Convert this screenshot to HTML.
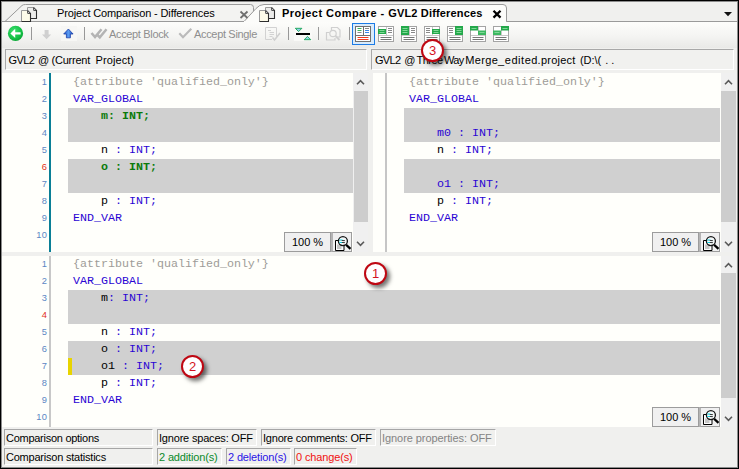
<!DOCTYPE html>
<html><head><meta charset="utf-8"><title>Project Compare - GVL2 Differences</title>
<style>
html,body{margin:0;padding:0;}
body{width:739px;height:469px;overflow:hidden;background:#f0f0ee;font-family:"Liberation Sans",sans-serif;font-size:11px;color:#000;position:relative;}
.a{position:absolute;}
#frame{left:0;top:0;width:737px;height:467px;border:1px solid #000;z-index:50;pointer-events:none;box-shadow:inset 0 0 0 1px #8c8c8c;}
.t{position:absolute;white-space:nowrap;line-height:14px;}
/* tabs */
#tabline{left:1px;top:21px;width:737px;height:1px;background:#9a9a9a;}
#toolbar{left:1px;top:22px;width:737px;height:26px;background:linear-gradient(#fdfdfb,#f4f4f2 55%,#e9e9e7);}
.sep{position:absolute;top:27px;width:1px;height:13px;background:#989898;}
.hdr{position:absolute;top:49px;height:21px;border:1px solid #a8a8a8;border-right-color:#fff;border-bottom-color:#fff;box-sizing:border-box;background:#f1f1ef;}
.pane{position:absolute;background:#fffffb;overflow:hidden;}
.code{position:absolute;font-family:"Liberation Mono",monospace;font-size:11.67px;line-height:17px;white-space:pre;}
.code div{height:17px;}
.ln{position:absolute;text-align:right;letter-spacing:0.5px;margin-left:0.5px;font-size:9.3px;line-height:17px;color:#5b86c4;}
.ln div{height:17px;}
.ln .r{color:#e03020;}
.g{position:absolute;background:#d0d0d0;}
.k{color:#2a04d4;}
.c{color:#9e9c98;}
.gr{color:#0a7a0a;font-weight:bold;}
.sb{position:absolute;background:#f0f0f0;}
.th{position:absolute;background:#cdcdcd;}
.zoom{position:absolute;width:47px;height:20px;border:1px solid #9c9c9c;box-sizing:border-box;background:#f0f0f0;text-align:center;line-height:18px;font-size:11px;}
.zb{position:absolute;width:21px;height:20px;border:1px solid #9c9c9c;border-left:2px solid #b4b4b4;box-sizing:border-box;background:#f0f0f0;}
.st{position:absolute;height:17px;border:1px solid #a6a6a6;border-right-color:#fff;border-bottom-color:#fff;box-sizing:border-box;line-height:17px;padding-left:1px;white-space:nowrap;font-size:11px;}
.ball{position:absolute;width:19px;height:19px;border-radius:50%;border:2px solid #bf0712;background:#fff;color:#d41222;font-size:13px;line-height:19px;text-align:center;box-shadow:3px 3px 4px rgba(0,0,0,.55);z-index:20;}
</style></head><body>
<!-- TABS -->
<div class="a" id="tabline"></div>
<svg class="a" style="left:0;top:0" width="739" height="24" viewBox="0 0 739 24">
 <path d="M5 21.5 L22 5.5 Q23 4.5 25.5 4.5 L250.5 4.5 Q253.5 4.5 253.5 7.5 L253.5 12 L245 21.5 Z" fill="#f3f3f1" stroke="#9a9a9a" stroke-width="1"/>
 <path d="M244 21.5 L256 8.5 Q259.5 4.5 264 4.5 L503 4.5 Q506.5 4.5 506.5 8 L506.5 21.5" fill="#fcfcfa" stroke="#9a9a9a" stroke-width="1"/>
 <rect x="244" y="21" width="262" height="2" fill="#fcfcfa"/>
<g id="docs">
  <path d="M27.500 7.500 h6 l3 3 v8 h-9 z" fill="#ececea" stroke="#9a9a9a" stroke-width="1"/>
  <path d="M33.500 7.500 l3 3 v8 h-5.500" fill="none" stroke="#2e2e2e" stroke-width="1.100"/>
  <path d="M33.700 8 v2.400 h2.400" fill="#fff" stroke="#2e2e2e" stroke-width="0.900"/>
  <path d="M21.500 10.500 h6 l3 3 v8 h-9 z" fill="#fdfbe9" stroke="#9a9a9a" stroke-width="1"/>
  <path d="M27.500 10.500 l3 3 v8 h-9" fill="none" stroke="#2e2e2e" stroke-width="1.100"/>
  <path d="M27.700 11 v2.400 h2.400" fill="#fff" stroke="#2e2e2e" stroke-width="0.900"/>
 </g>
 <use href="#docs" x="238" y="0"/>
 <path d="M240.500 11.500 l7 6.500 M247.500 11.500 l-7 6.500" stroke="#6e6e6e" stroke-width="1.800" fill="none"/>
 <path d="M493.500 10.800 l7 6.800 M500.500 10.800 l-7 6.800" stroke="#000" stroke-width="2.300" fill="none"/>
 <path d="M724 12 h8 l-4 4.200 z" fill="#111"/>
</svg>
<div class="t" style="letter-spacing:-0.134px;left:57px;top:6px;">Project Comparison - Differences</div>
<div class="t" style="left:282px;top:6px;font-weight:bold;"><span style="letter-spacing:0.465px;">Project Compare - </span><span style="letter-spacing:0.17px;">GVL2 Differences</span></div>
<!-- TOOLBAR -->
<div class="a" id="toolbar"></div>
<svg class="a" style="left:0;top:22px" width="739" height="24" viewBox="0 22 739 24">
 <defs>
  <radialGradient id="gg" cx="0.4" cy="0.35" r="0.7"><stop offset="0" stop-color="#3ee070"/><stop offset="0.7" stop-color="#12bf44"/><stop offset="1" stop-color="#0aa233"/></radialGradient>
  <linearGradient id="bl" x1="0" y1="0" x2="1" y2="0"><stop offset="0" stop-color="#1d55c8"/><stop offset="0.5" stop-color="#5a9cf2"/><stop offset="1" stop-color="#1d4fc0"/></linearGradient>
 </defs>
 <circle cx="15.5" cy="33.4" r="7.6" fill="url(#gg)"/>
 <path d="M10.400 33.400 L15.200 28.800 L15.200 32.200 L20.600 32.200 L20.600 34.600 L15.200 34.600 L15.200 38 Z" fill="#fff"/>
 <path d="M44.6 30 h4 v4.6 h2.6 l-4.6 4.6 l-4.6 -4.6 h2.6 z" fill="#d0d0d0"/>
 <rect x="61" y="26" width="16" height="15" fill="#f7f7f5"/>
 <path d="M68.4 29 l4.7 5 h-2.7 v3.8 h-4 v-3.8 h-2.7 z" fill="url(#bl)" stroke="#1a3fa8" stroke-width="0.8"/>
 <path d="M91.500 33 L95 37 L101.500 29.300" fill="none" stroke="#b4b4b4" stroke-width="2.500"/>
 <path d="M97.500 35 L99.800 37.300 L106.500 29.300" fill="none" stroke="#b4b4b4" stroke-width="2.500"/>
 <path d="M179.300 33.300 L183 37.300 L191.300 28.800" fill="none" stroke="#bababa" stroke-width="2.100"/>
 <g fill="none" stroke="#d2d2d2" stroke-width="1">
  <path d="M265.500 27.500 h11 v9 M272 39.500 h-6.500 v-12"/>
  <path d="M268 30.500 h3 M269.500 32.500 h4.500 M269.500 34.500 h4.500 M269.500 36.500 h3"/>
  <path d="M272.500 37.500 l2 2.500 l5.500 -7" stroke-width="1.600" stroke="#cfcfcf"/>
 </g>
 <rect x="294" y="26" width="18" height="15" fill="#f9f9f7"/>
 <rect x="296" y="33" width="14" height="2" fill="#000"/>
 <path d="M295.300 28.300 h6.600 l-3.300 3.300 z" fill="#8fd0ea" stroke="#17a455" stroke-width="0.900"/>
 <path d="M304.200 39.700 h6.600 l-3.300 -3.300 z" fill="#8fd0ea" stroke="#17a455" stroke-width="0.900"/>
 <g fill="none" stroke="#d0d0d0" stroke-width="1.200">
  <path d="M331.500 30.500 v-3 h6 l2.500 2.500 v7 h-3"/>
  <path d="M329.500 32.500 h-3 v7.500 h8.500 v-2"/>
  <circle cx="333" cy="33.500" r="3.200"/>
  <path d="M335.500 36 l4 4" stroke-width="1.800"/>
 </g>
 <rect x="352.500" y="23.500" width="22" height="21" fill="#d9ebfb" stroke="#1c7be6" stroke-width="1"/>
 <!-- icon1 -->
 <g>
  <rect x="355.500" y="26.500" width="15" height="15" fill="#fff" stroke="#707070"/>
  <path d="M363.500 27 v8 M356 35.500 h14" stroke="#707070" stroke-width="1" fill="none"/>
  <path d="M357.500 28.500 h4 M357.500 30.500 h4" stroke="#3cb45a"/><path d="M357.500 32.500 h4" stroke="#888"/>
  <path d="M365 28.500 h4" stroke="#888"/><path d="M365 30.500 h4 M365 32.500 h4" stroke="#3a86e8"/>
  <path d="M357.500 37.500 h11 M357.500 39.500 h11" stroke="#f23a1e"/>
 </g>
 <g transform="translate(378 26)"><rect x="0.5" y="0.500" width="15" height="15" fill="#fff" stroke="#a4a4a4"/><path d="M8.500 1 v8 M1 9.500 h14" stroke="#c8c8c8" stroke-width="1" fill="none"/><path d="M2.500 11.500 h11 M2.500 13.500 h11" stroke="#777"/><rect x="0" y="3" width="8" height="5" fill="#23a84a"/><path d="M1.500 4.500 h5 M1.500 6.500 h5" stroke="#7fd896"/><path d="M10 2.500 h4 M10 4.500 h4 M10 6.500 h4" stroke="#888"/></g><g transform="translate(401 26)"><rect x="0.5" y="0.500" width="15" height="15" fill="#fff" stroke="#a4a4a4"/><path d="M8.500 1 v8 M1 9.500 h14" stroke="#c8c8c8" stroke-width="1" fill="none"/><path d="M2.500 11.500 h11 M2.500 13.500 h11" stroke="#777"/><rect x="0" y="0" width="8" height="9" fill="#23a84a"/><path d="M1.500 2.500 h5 M1.500 4.500 h5 M1.500 6.500 h5" stroke="#7fd896"/><path d="M10 2.500 h4 M10 4.500 h4 M10 6.500 h4" stroke="#888"/></g><g transform="translate(424 26)"><rect x="0.5" y="0.500" width="15" height="15" fill="#fff" stroke="#a4a4a4"/><path d="M8.500 1 v8 M1 9.500 h14" stroke="#c8c8c8" stroke-width="1" fill="none"/><path d="M2.500 11.500 h11 M2.500 13.500 h11" stroke="#777"/><rect x="8" y="3" width="8" height="5" fill="#23a84a"/><path d="M9.500 4.500 h5 M9.500 6.500 h5" stroke="#7fd896"/><path d="M2 2.500 h4 M2 4.500 h4 M2 6.500 h4" stroke="#888"/></g><g transform="translate(447 26)"><rect x="0.5" y="0.500" width="15" height="15" fill="#fff" stroke="#a4a4a4"/><path d="M8.500 1 v8 M1 9.500 h14" stroke="#c8c8c8" stroke-width="1" fill="none"/><path d="M2.500 11.500 h11 M2.500 13.500 h11" stroke="#777"/><rect x="8" y="0" width="8" height="9" fill="#23a84a"/><path d="M9.500 2.500 h5 M9.500 4.500 h5 M9.500 6.500 h5" stroke="#7fd896"/><path d="M2 2.500 h4 M2 4.500 h4 M2 6.500 h4" stroke="#888"/></g><g transform="translate(470 26)"><rect x="0.5" y="0.500" width="15" height="15" fill="#fff" stroke="#a4a4a4"/><path d="M8.500 1 v8 M1 9.500 h14" stroke="#c8c8c8" stroke-width="1" fill="none"/><path d="M2.500 11.500 h11 M2.500 13.500 h11" stroke="#777"/><rect x="0" y="0" width="8" height="4.500" fill="#23a84a"/><path d="M1.500 2.500 h5" stroke="#7fd896"/><rect x="8" y="4.500" width="8" height="4.500" fill="#3cb860"/><path d="M9.500 6.500 h5" stroke="#7fd896"/></g><g transform="translate(493 26)"><rect x="0.5" y="0.500" width="15" height="15" fill="#fff" stroke="#a4a4a4"/><path d="M8.500 1 v8 M1 9.500 h14" stroke="#c8c8c8" stroke-width="1" fill="none"/><path d="M2.500 11.500 h11 M2.500 13.500 h11" stroke="#777"/><rect x="8" y="0" width="8" height="4.500" fill="#23a84a"/><path d="M9.500 2.500 h5" stroke="#7fd896"/><rect x="0" y="4.500" width="8" height="4.500" fill="#3cb860"/><path d="M1.500 6.500 h5" stroke="#7fd896"/></g>
</svg>
<div class="sep" style="left:31px"></div><div class="sep" style="left:84px"></div><div class="sep" style="left:288px"></div><div class="sep" style="left:318px"></div><div class="sep" style="left:349px"></div>
<div class="t" style="letter-spacing:-0.34px;left:109px;top:27px;color:#8e8e8e;">Accept Block</div>
<div class="t" style="letter-spacing:-0.33px;left:194px;top:27px;color:#8e8e8e;">Accept Single</div>
<!-- HEADERS -->
<div class="hdr" style="left:5px;width:362px;"></div>
<div class="hdr" style="left:371px;width:363px;"></div>
<div class="t" style="left:0;top:53px;"><span class="a" style="left:8.5px;letter-spacing:-0.6px;">GVL2</span> <span class="a" style="left:37.9px;letter-spacing:0px;">@</span> <span class="a" style="left:51.5px;letter-spacing:-0.229px;">(Current</span> <span class="a" style="left:95.6px;letter-spacing:0.071px;">Project)</span></div>
<div class="t" style="left:0;top:53px;"><span class="a" style="left:374.9px;letter-spacing:-0.6px;">GVL2</span> <span class="a" style="left:404.3px;letter-spacing:0px;">@</span> <span class="a" style="left:416.5px;letter-spacing:-0.5px;">Three</span><span class="a" style="left:444px;letter-spacing:-0.65px;">Way</span><span class="a" style="left:465.2px;letter-spacing:0.35px;">Merge</span><span class="a" style="left:498.1px;letter-spacing:0.55px;">_edited</span><span class="a" style="left:537.6px;letter-spacing:0.243px;">.project</span> <span class="a" style="left:580px;letter-spacing:-0.05px;">(D:\(</span><span class="a" style="left:605.3px;letter-spacing:0px;">.</span><span class="a" style="left:611.2px;letter-spacing:0px;">.</span></div>
<!-- TOP LEFT PANE -->
<div class="pane" style="left:2px;top:73px;width:351px;height:179px;">
 <div class="g" style="left:66px;top:35px;width:285px;height:34px;"></div>
 <div class="g" style="left:66px;top:86px;width:285px;height:34px;"></div>
 <div class="a" style="left:47px;top:0;width:2px;height:179px;background:#0a7f96;"></div>
 <div class="ln" style="left:0;top:1px;width:45px;"><div>1</div><div>2</div><div>3</div><div>4</div><div>5</div><div class="r">6</div><div>7</div><div>8</div><div>9</div><div>10</div></div>
 <div class="code" style="left:71px;top:1px;"><div class="c">{attribute 'qualified_only'}</div><div class="k">VAR_GLOBAL</div><div class="gr">    m: INT;</div><div> </div><div>    n <span class="k">: INT;</span></div><div class="gr">    o : INT;</div><div> </div><div>    p <span class="k">: INT;</span></div><div class="k">END_VAR</div><div> </div></div>
</div>
<div class="sb" style="left:353px;top:73px;width:15px;height:179px;"><div class="th" style="left:1px;top:18px;width:14px;height:131px;"></div></div>
<div class="zoom" style="left:284px;top:232px;">100 %</div><div class="zb" style="left:331px;top:232px;"></div>
<!-- TOP RIGHT PANE -->
<div class="pane" style="left:373px;top:73px;width:348px;height:179px;">
 <div class="g" style="left:31px;top:35px;width:316px;height:34px;"></div>
 <div class="g" style="left:31px;top:86px;width:316px;height:34px;"></div>
 <div class="a" style="left:12px;top:0;width:2px;height:179px;background:#c6c6c6;"></div>
 <div class="code" style="left:36px;top:1px;"><div class="c">{attribute 'qualified_only'}</div><div class="k">VAR_GLOBAL</div><div> </div><div class="k">    m0 : INT;</div><div>    n <span class="k">: INT;</span></div><div> </div><div class="k">    o1 : INT;</div><div>    p <span class="k">: INT;</span></div><div class="k">END_VAR</div><div> </div></div>
</div>
<div class="sb" style="left:721px;top:73px;width:15px;height:179px;"><div class="th" style="left:0px;top:18px;width:15px;height:131px;"></div></div>
<div class="zoom" style="left:652px;top:232px;">100 %</div><div class="zb" style="left:699px;top:232px;"></div>
<!-- BOTTOM PANE -->
<div class="pane" style="left:2px;top:256px;width:719px;height:171px;">
 <div class="g" style="left:66px;top:34px;width:652px;height:34px;"></div>
 <div class="g" style="left:66px;top:85px;width:652px;height:34px;"></div>
 <div class="a" style="left:66px;top:102px;width:4px;height:17px;background:#e8d400;"></div>
 <div class="a" style="left:47px;top:0;width:2px;height:171px;background:#c8c8c8;"></div>
 <div class="ln" style="left:0;top:0px;width:45px;"><div>1</div><div>2</div><div>3</div><div class="r">4</div><div>5</div><div>6</div><div>7</div><div>8</div><div>9</div><div>10</div></div>
 <div class="code" style="left:71px;top:0px;"><div class="c">{attribute 'qualified_only'}</div><div class="k">VAR_GLOBAL</div><div>    m<span class="k">: INT;</span></div><div> </div><div>    n <span class="k">: INT;</span></div><div>    o <span class="k">: INT;</span></div><div>    o1 <span class="k">: INT;</span></div><div>    p <span class="k">: INT;</span></div><div class="k">END_VAR</div><div> </div></div>
</div>
<div class="sb" style="left:721px;top:256px;width:15px;height:171px;"><div class="th" style="left:0px;top:17px;width:15px;height:125px;"></div></div>
<div class="zoom" style="left:652px;top:407px;">100 %</div><div class="zb" style="left:699px;top:407px;"></div>
<svg class="a" style="left:356px;top:79px" width="9" height="6" viewBox="0 0 9 6"><path d="M1 5.200 L4.500 1.700 L8 5.200" fill="none" stroke="#5a5a5a" stroke-width="1.600"/></svg><svg class="a" style="left:356px;top:241px" width="9" height="6" viewBox="0 0 9 6"><path d="M1 0.800 L4.500 4.300 L8 0.800" fill="none" stroke="#5a5a5a" stroke-width="1.600"/></svg><svg class="a" style="left:724px;top:79px" width="9" height="6" viewBox="0 0 9 6"><path d="M1 5.200 L4.500 1.700 L8 5.200" fill="none" stroke="#5a5a5a" stroke-width="1.600"/></svg><svg class="a" style="left:724px;top:241px" width="9" height="6" viewBox="0 0 9 6"><path d="M1 0.800 L4.500 4.300 L8 0.800" fill="none" stroke="#5a5a5a" stroke-width="1.600"/></svg><svg class="a" style="left:724px;top:262px" width="9" height="6" viewBox="0 0 9 6"><path d="M1 5.200 L4.500 1.700 L8 5.200" fill="none" stroke="#5a5a5a" stroke-width="1.600"/></svg><svg class="a" style="left:724px;top:416px" width="9" height="6" viewBox="0 0 9 6"><path d="M1 0.800 L4.500 4.300 L8 0.800" fill="none" stroke="#5a5a5a" stroke-width="1.600"/></svg><svg class="a" style="left:333px;top:234px" width="19" height="18" viewBox="0 0 19 18"><path d="M2.500 6.500 h8.500 v10 h-8.500 z" fill="#fbfbfb" stroke="#000" stroke-width="1"/><rect x="4" y="10.500" width="4.500" height="4.500" fill="#c6c6c6"/><circle cx="9.900" cy="7.100" r="4.500" fill="#f3f7f7" fill-opacity="0.880" stroke="#141414" stroke-width="1.300"/><path d="M6.300 6 h3.200 M6.300 8.500 h3.200" stroke="#12d6e6" stroke-width="1.100"/><path d="M8.800 6.500 h3 M8.800 8.500 h3" stroke="#2a2a2a" stroke-width="0.900"/><path d="M13.200 10.900 L17.500 14.900" stroke="#000" stroke-width="2.200"/></svg><svg class="a" style="left:701px;top:234px" width="19" height="18" viewBox="0 0 19 18"><path d="M2.500 6.500 h8.500 v10 h-8.500 z" fill="#fbfbfb" stroke="#000" stroke-width="1"/><rect x="4" y="10.500" width="4.500" height="4.500" fill="#c6c6c6"/><circle cx="9.900" cy="7.100" r="4.500" fill="#f3f7f7" fill-opacity="0.880" stroke="#141414" stroke-width="1.300"/><path d="M6.300 6 h3.200 M6.300 8.500 h3.200" stroke="#12d6e6" stroke-width="1.100"/><path d="M8.800 6.500 h3 M8.800 8.500 h3" stroke="#2a2a2a" stroke-width="0.900"/><path d="M13.200 10.900 L17.500 14.900" stroke="#000" stroke-width="2.200"/></svg><svg class="a" style="left:701px;top:408px" width="19" height="18" viewBox="0 0 19 18"><path d="M2.500 6.500 h8.500 v10 h-8.500 z" fill="#fbfbfb" stroke="#000" stroke-width="1"/><rect x="4" y="10.500" width="4.500" height="4.500" fill="#c6c6c6"/><circle cx="9.900" cy="7.100" r="4.500" fill="#f3f7f7" fill-opacity="0.880" stroke="#141414" stroke-width="1.300"/><path d="M6.300 6 h3.200 M6.300 8.500 h3.200" stroke="#12d6e6" stroke-width="1.100"/><path d="M8.800 6.500 h3 M8.800 8.500 h3" stroke="#2a2a2a" stroke-width="0.900"/><path d="M13.200 10.900 L17.500 14.900" stroke="#000" stroke-width="2.200"/></svg>
<!-- STATUS -->
<div class="st" style="letter-spacing:-0.27px;left:4px;top:429px;width:149px;">Comparison options</div>
<div class="st" style="letter-spacing:-0.19px;left:157px;top:429px;width:100px;">Ignore spaces: OFF</div>
<div class="st" style="letter-spacing:-0.215px;left:261px;top:429px;width:115px;">Ignore comments: OFF</div>
<div class="st" style="letter-spacing:-0.07px;left:380px;top:429px;width:116px;color:#848484;">Ignore properties: OFF</div>
<div class="st" style="letter-spacing:-0.22px;left:4px;top:448px;width:149px;">Comparison statistics</div>
<div class="st" style="letter-spacing:-0.146px;left:157px;top:448px;width:65px;color:#0a8a2a;">2 addition(s)</div>
<div class="st" style="letter-spacing:-0.146px;left:226px;top:448px;width:65px;color:#2a14e6;">2 deletion(s)</div>
<div class="st" style="letter-spacing:-0.136px;left:294px;top:448px;width:63px;color:#f01010;">0 change(s)</div>
<!-- BALLS -->
<div class="ball" style="left:364px;top:262px;">1</div>
<div class="ball" style="left:181px;top:355px;">2</div>
<div class="ball" style="left:421px;top:39px;">3</div>
<div class="a" id="frame"></div>
</body></html>
